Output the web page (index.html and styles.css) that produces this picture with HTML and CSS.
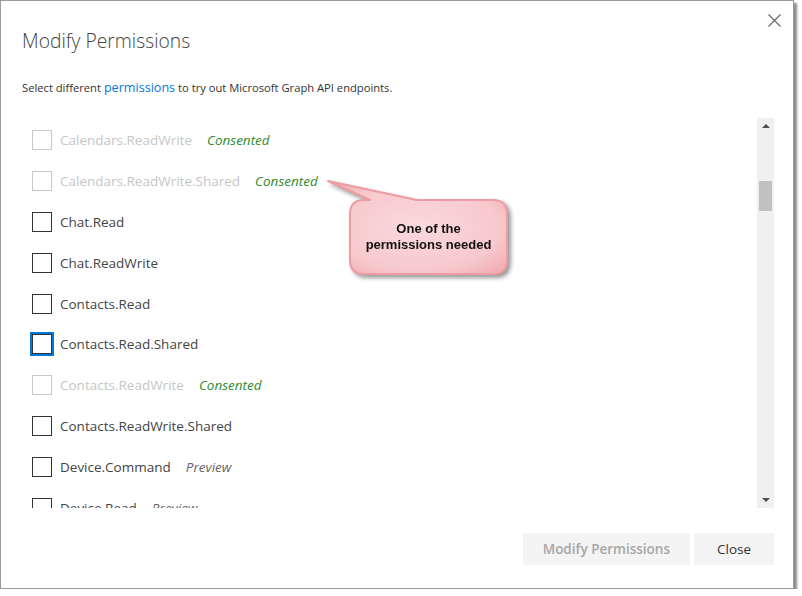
FILE: index.html
```html
<!DOCTYPE html>
<html lang="en">
<head>
    <meta charset="UTF-8">
    <title>Modify Permissions</title>
    <link rel="stylesheet" href="styles.css">
</head>
<body>
    <div class="dialog">
        <button class="close-x" aria-label="Close">
            <svg width="13" height="13" viewBox="0 0 13 13"><path d="M0.5 0.5 L12.5 12.5 M12.5 0.5 L0.5 12.5" stroke="#666" stroke-width="1.1" fill="none"/></svg>
        </button>

        <h1 class="title">Modify Permissions</h1>
        <p class="intro">Select different <a href="#">permissions</a> to try out Microsoft Graph API endpoints.</p>

        <div class="list-box">
            <div class="rows">
                <div class="row disabled"><span class="check"></span><span class="name">Calendars.ReadWrite</span><span class="tag consented">Consented</span></div>
                <div class="row disabled"><span class="check"></span><span class="name">Calendars.ReadWrite.Shared</span><span class="tag consented">Consented</span></div>
                <div class="row"><span class="check"></span><span class="name">Chat.Read</span></div>
                <div class="row"><span class="check"></span><span class="name">Chat.ReadWrite</span></div>
                <div class="row"><span class="check"></span><span class="name">Contacts.Read</span></div>
                <div class="row"><span class="check focused"></span><span class="name">Contacts.Read.Shared</span></div>
                <div class="row disabled"><span class="check"></span><span class="name">Contacts.ReadWrite</span><span class="tag consented">Consented</span></div>
                <div class="row"><span class="check"></span><span class="name">Contacts.ReadWrite.Shared</span></div>
                <div class="row"><span class="check"></span><span class="name">Device.Command</span><span class="tag preview">Preview</span></div>
                <div class="row"><span class="check"></span><span class="name">Device.Read</span><span class="tag preview">Preview</span></div>
            </div>
            <div class="scrollbar">
                <span class="arrow up"></span>
                <span class="thumb"></span>
                <span class="arrow down"></span>
            </div>
        </div>

        <div class="footer">
            <button class="btn" disabled>Modify Permissions</button>
            <button class="btn btn-close">Close</button>
        </div>

        <!-- callout note over the list -->
        <div class="callout">
            <svg width="200" height="115" viewBox="0 0 200 115">
                <defs>
                    <radialGradient id="pink" cx="50%" cy="50%" r="65%">
                        <stop offset="0" stop-color="#fad9dc"/>
                        <stop offset="0.7" stop-color="#f7c9cd"/>
                        <stop offset="1" stop-color="#f2aeb4"/>
                    </radialGradient>
                </defs>
                <path d="M44 29 L50 29 L8 10 L97 29 L173 29 Q187 29 187 43 L187 89 Q187 103 173 103 L44 103 Q30 103 30 89 L30 43 Q30 29 44 29 Z" fill="url(#pink)" stroke="#ee9ca3" stroke-width="2" stroke-linejoin="round"/>
            </svg>
            <div class="callout-text">One of the<br>permissions needed</div>
        </div>
    </div>
</body>
</html>
```

FILE: styles.css
```css
body {
    margin: 0;
    background-color: #fff;
    font-family: "Open Sans", "Noto Sans", sans-serif;
    color: #333;
}

.dialog {
    position: relative;
    box-sizing: border-box;
    width: 794px;
    height: 589px;
    border: 1px solid #9a9a9a;
    background-color: #fff;
    box-shadow: 3px 3px 2px rgba(0, 0, 0, 0.45);
    padding: 26px 19px 0 21px;
    display: flex;
    flex-direction: column;
}

.close-x {
    position: absolute;
    top: 13px;
    right: 12px;
    padding: 0;
    border: none;
    background: none;
    line-height: 0;
}

.title {
    margin: 0;
    font-size: 19.3px;
    font-weight: 300;
    line-height: 28px;
    color: #444;
}

.intro {
    margin: 25px 0 0 0;
    font-size: 11.2px;
    line-height: 16px;
    color: #333;
}

.intro a {
    color: #0078d7;
    text-decoration: none;
    font-size: 12.6px;
}

.list-box {
    margin-top: 22px;
    height: 390px;
    display: flex;
}

.rows {
    flex: 1;
    overflow: hidden;
    padding: 2px 0 0 10px;
}

.row {
    height: 40.8px;
    display: flex;
    align-items: center;
    font-size: 13.5px;
    color: #444;
}

.check {
    box-sizing: border-box;
    width: 20px;
    height: 20px;
    border: 1px solid #333;
    margin-right: 8px;
    flex-shrink: 0;
}

.check.focused {
    outline: 2px solid #0078d7;
}

.row.disabled .name {
    color: #c6c6c6;
}

.row.disabled .check {
    border-color: #c8c8c8;
}

.tag {
    font-style: italic;
    margin-left: 15px;
}

.consented {
    color: #2e8b2e;
}

.preview {
    color: #666;
}

.scrollbar {
    position: relative;
    width: 17px;
    background-color: #f0f0f0;
}

.thumb {
    position: absolute;
    left: 2px;
    top: 63px;
    width: 13px;
    height: 30px;
    background-color: #c1c1c1;
}

.arrow {
    position: absolute;
    left: 5px;
    width: 0;
    height: 0;
    border-left: 4px solid transparent;
    border-right: 4px solid transparent;
}

.arrow.up {
    top: 6px;
    border-bottom: 4px solid #505050;
}

.arrow.down {
    bottom: 6px;
    border-top: 4px solid #505050;
}

.footer {
    margin-top: 25px;
    display: flex;
    justify-content: flex-end;
    gap: 4px;
}

.btn {
    height: 32px;
    padding: 0 20px;
    border: none;
    background-color: #f4f4f4;
    font-family: "Open Sans", "Noto Sans", sans-serif;
    font-size: 13.5px;
    font-weight: 600;
    color: #333;
}

.btn:disabled {
    color: #a6a6a6;
}

.btn-close {
    min-width: 80px;
    font-weight: 500;
}

.callout {
    position: absolute;
    left: 319px;
    top: 170px;
    width: 200px;
    height: 115px;
    filter: drop-shadow(3px 3px 2px rgba(0, 0, 0, 0.4));
}

.callout svg {
    display: block;
}

.callout-text {
    position: absolute;
    left: 30px;
    top: 29px;
    width: 157px;
    height: 74px;
    display: flex;
    align-items: center;
    justify-content: center;
    text-align: center;
    font-family: "Liberation Sans", Arial, sans-serif;
    font-weight: bold;
    font-size: 13px;
    line-height: 16px;
    color: #111;
}
```
